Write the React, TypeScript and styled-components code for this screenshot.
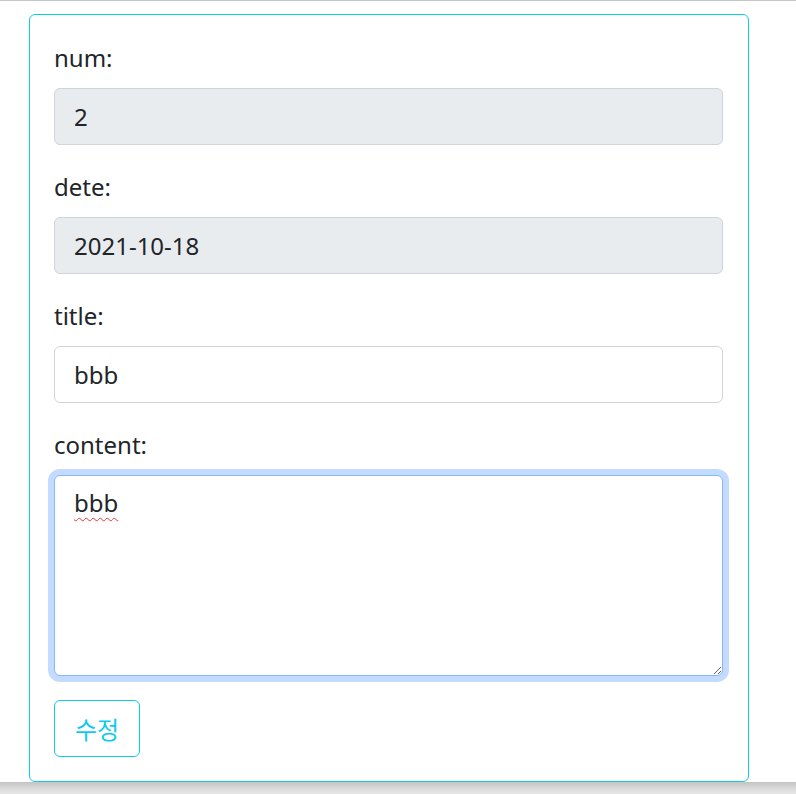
import React from "react";
import styled, { createGlobalStyle } from "styled-components";

const GlobalStyle = createGlobalStyle`
  html, body {
    margin: 0;
    padding: 0;
    background: #ffffff;
  }
  body {
    font-family: "Noto Sans", "Open Sans", "Noto Sans CJK KR", sans-serif;
    color: #212529;
  }
  * { box-sizing: border-box; }
`;

const Page = styled.div`
  display: flex;
  flex-direction: column;
  height: 794px;
  overflow: hidden;
`;

const TopRule = styled.div`
  height: 1px;
  background: #c6c6c6;
  flex: none;
`;

const Main = styled.main`
  flex: 1;
  padding: 13px 0 0 29px;
`;

const BottomBand = styled.div`
  height: 12px;
  flex: none;
  background: linear-gradient(#c4c4c4, #dcdcdc 60%, #e6e6e6);
`;

const Card = styled.form`
  width: 720px;
  border: 1px solid #0dcaf0;
  border-radius: 6px;
  padding: 25px 25px 24px 24px;
  display: flex;
  flex-direction: column;
  align-items: flex-start;
`;

const Field = styled.div`
  width: 100%;
  margin-bottom: 24px;
`;

const Label = styled.label`
  display: block;
  font-size: 24px;
  line-height: 36px;
  margin-bottom: 12px;
  color: #212529;
`;

const Input = styled.input<{ $disabled?: boolean }>`
  display: block;
  width: 100%;
  height: 57px;
  padding: 9px 19px;
  font-family: inherit;
  font-size: 24px;
  line-height: 36px;
  color: #212529;
  background: ${(p) => (p.$disabled ? "#e9ecef" : "#ffffff")};
  border: 1px solid #ced4da;
  border-radius: 6px;
  outline: none;
`;

const TextArea = styled.textarea`
  display: block;
  width: 100%;
  height: 201px;
  padding: 9px 19px;
  font-family: inherit;
  font-size: 24px;
  line-height: 36px;
  color: #212529;
  background: #ffffff;
  border: 1px solid #86b7fe;
  border-radius: 6px;
  outline: none;
  box-shadow: 0 0 0 6px rgba(13, 110, 253, 0.25);
  text-decoration: underline wavy #e53935;
  text-decoration-thickness: 1px;
  text-underline-offset: 5px;
`;

const Button = styled.button`
  font-family: "Noto Sans CJK KR", "Noto Sans", sans-serif;
  font-size: 24px;
  line-height: 35px;
  padding: 10px 20px;
  color: #0dcaf0;
  background: transparent;
  border: 1px solid #0dcaf0;
  border-radius: 6px;
  cursor: pointer;
`;

export default function App() {
  return (
    <Page>
      <GlobalStyle />
      <TopRule />
      <Main>
        <Card onSubmit={(e) => e.preventDefault()}>
          <Field>
            <Label htmlFor="num">num:</Label>
            <Input id="num" $disabled readOnly value="2" />
          </Field>
          <Field>
            <Label htmlFor="dete">dete:</Label>
            <Input id="dete" $disabled readOnly value="2021-10-18" />
          </Field>
          <Field>
            <Label htmlFor="title">title:</Label>
            <Input id="title" defaultValue="bbb" />
          </Field>
          <Field>
            <Label htmlFor="content">content:</Label>
            <TextArea id="content" defaultValue="bbb" spellCheck={false} />
          </Field>
          <Button type="submit">수정</Button>
        </Card>
      </Main>
      <BottomBand />
    </Page>
  );
}
